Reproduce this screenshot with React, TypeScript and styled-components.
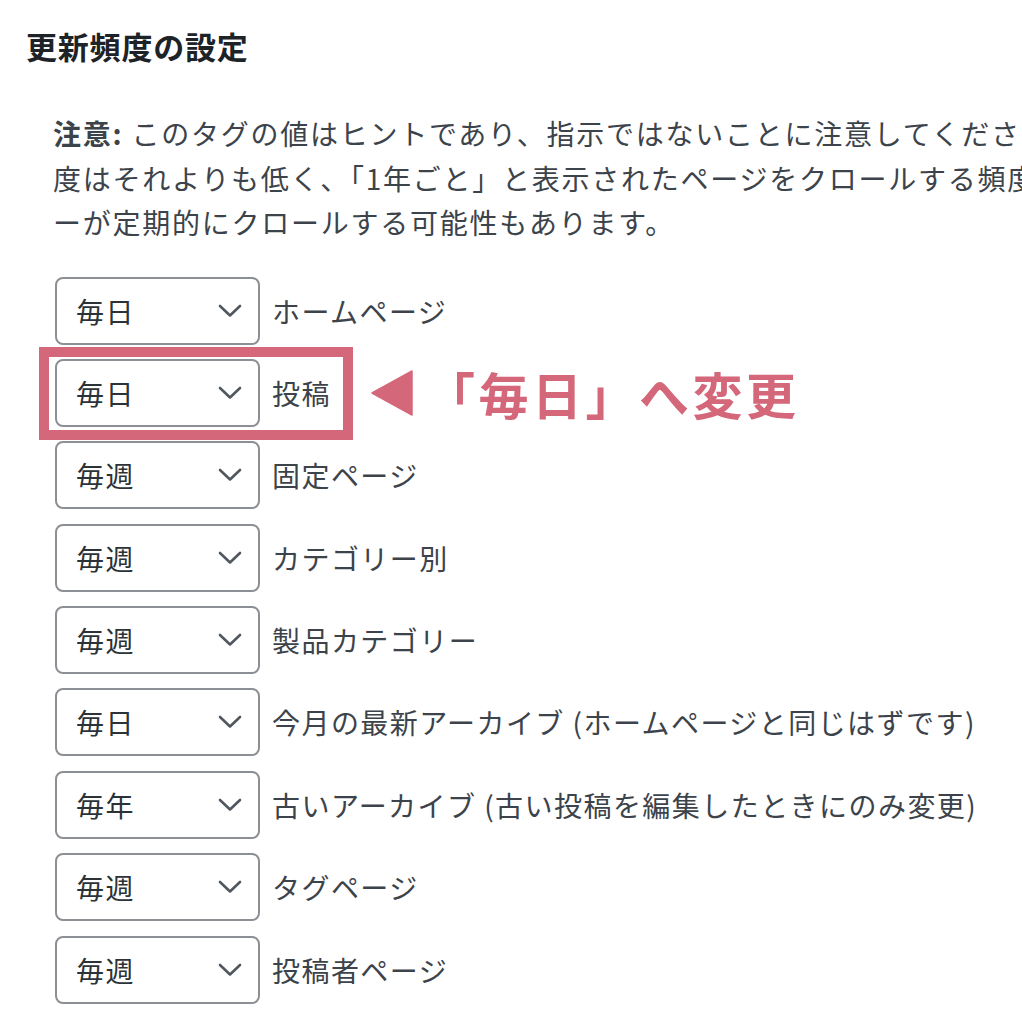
import styled, { createGlobalStyle } from "styled-components"

const GlobalStyle = createGlobalStyle`
    html, body {
        margin: 0;
        padding: 0;
        background: #ffffff;
        overflow: hidden;
    }
    body {
        font-family: "Noto Sans CJK JP", "Noto Sans", sans-serif;
        color: #3c434a;
    }
`

const ACCENT = "#d4687a"

const PageStyle = styled.div`
    width: 1022px;
    height: 1024px;
    overflow: hidden;
    padding: 26px 0 0 26px;
    box-sizing: border-box;
`

const HeadingStyle = styled.h2`
    margin: 0;
    font-size: 31px;
    line-height: 40px;
    font-weight: 700;
    color: #1d2327;
    letter-spacing: 0.8px;
`

const SectionStyle = styled.div`
    padding-left: 27px;
    margin-top: 45px;
`

const NoteStyle = styled.div`
    font-size: 28px;
    line-height: 44.5px;
    letter-spacing: 1.75px;
    white-space: nowrap;

    strong {
        font-weight: 700;
        color: #3c434a;
    }
`

const RowsStyle = styled.div`
    display: flex;
    flex-direction: column;
    gap: 14.4px;
    margin-top: 32px;
    padding-left: 2px;
`

const RowStyle = styled.div`
    position: relative;
    display: flex;
    align-items: center;
    height: 68px;
`

const SelectBoxStyle = styled.div`
    box-sizing: border-box;
    width: 205px;
    height: 68px;
    border: 2px solid #8c8f94;
    border-radius: 8px;
    background: #fff;
    display: flex;
    align-items: center;
    justify-content: space-between;
    padding: 0 16px 0 19px;
    font-size: 28px;
    letter-spacing: 1.5px;
    color: #2c3338;
`

const LabelStyle = styled.span`
    margin-left: 12px;
    font-size: 28px;
    letter-spacing: 1.45px;
    white-space: nowrap;
    color: #3c434a;
`

const FrameStyle = styled.div`
    position: absolute;
    left: -16px;
    top: -12px;
    width: 314px;
    height: 93px;
    box-sizing: border-box;
    border: 10px solid ${ACCENT};
    pointer-events: none;
`

const CalloutStyle = styled.div`
    position: absolute;
    left: 316px;
    top: 0;
    height: 68px;
    display: flex;
    align-items: center;
    gap: 12px;
    color: ${ACCENT};
    white-space: nowrap;
`

const CalloutTextStyle = styled.span`
    font-size: 50px;
    font-weight: 700;
    letter-spacing: 3.5px;
    line-height: 1;
`

const Chevron = () => (
    <svg width="24" height="14" viewBox="0 0 24 14" fill="none">
        <polyline points="2,2 12,11.5 22,2" stroke="#50575e" strokeWidth="2.6" strokeLinecap="round" strokeLinejoin="round" />
    </svg>
)

const Triangle = () => (
    <svg width="42" height="46" viewBox="0 0 42 46">
        <polygon points="41,1 41,45 1,23" fill={ACCENT} stroke={ACCENT} strokeWidth="1.5" strokeLinejoin="round" />
    </svg>
)

type Row = { value: string; label: string; highlight?: boolean }

const rows: Row[] = [
    { value: "毎日", label: "ホームページ" },
    { value: "毎日", label: "投稿", highlight: true },
    { value: "毎週", label: "固定ページ" },
    { value: "毎週", label: "カテゴリー別" },
    { value: "毎週", label: "製品カテゴリー" },
    { value: "毎日", label: "今月の最新アーカイブ (ホームページと同じはずです)" },
    { value: "毎年", label: "古いアーカイブ (古い投稿を編集したときにのみ変更)" },
    { value: "毎週", label: "タグページ" },
    { value: "毎週", label: "投稿者ページ" },
]

export default function App() {
    return (
        <PageStyle>
            <GlobalStyle />
            <HeadingStyle>更新頻度の設定</HeadingStyle>
            <SectionStyle>
                <NoteStyle>
                    <div>
                        <strong>注意:</strong> このタグの値はヒントであり、指示ではないことに注意してください。
                    </div>
                    <div>度はそれよりも低く、「1年ごと」と表示されたページをクロールする頻度</div>
                    <div>ーが定期的にクロールする可能性もあります。</div>
                </NoteStyle>
                <RowsStyle>
                    {rows.map((row, i) => (
                        <RowStyle key={i}>
                            <SelectBoxStyle>
                                <span>{row.value}</span>
                                <Chevron />
                            </SelectBoxStyle>
                            <LabelStyle>{row.label}</LabelStyle>
                            {row.highlight && (
                                <>
                                    <FrameStyle />
                                    <CalloutStyle>
                                        <Triangle />
                                        <CalloutTextStyle>「毎日」へ変更</CalloutTextStyle>
                                    </CalloutStyle>
                                </>
                            )}
                        </RowStyle>
                    ))}
                </RowsStyle>
            </SectionStyle>
        </PageStyle>
    )
}
